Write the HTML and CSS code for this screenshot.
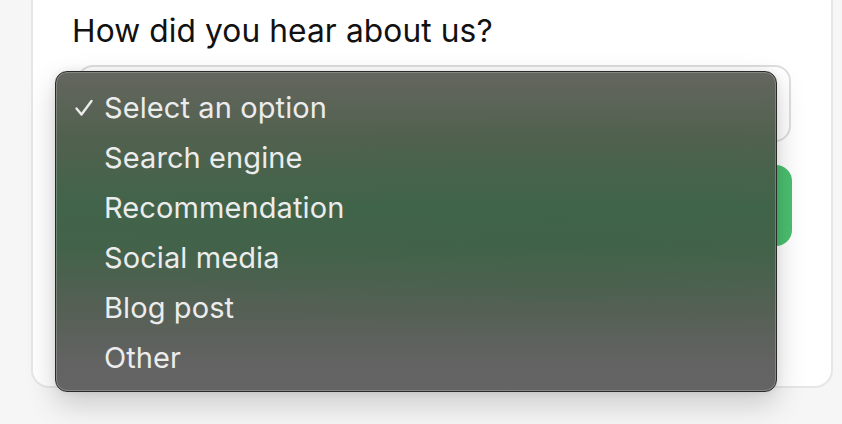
FILE: index.html
```html
<!DOCTYPE html>
<html lang="en">
<head>
<meta charset="utf-8">
<title>How did you hear about us?</title>
<link rel="stylesheet" href="styles.css">
</head>
<body>
<div class="page">
  <div class="card">
    <label class="label" for="source">How did you hear about us?</label>
    <div class="select" id="source"></div>
    <div class="button"></div>
    <ul class="menu" role="listbox">
      <li class="item selected"><svg class="check" viewBox="0 0 20 20" width="20" height="20"><path d="M2.5 10.5 L7.5 16.5 L17.5 3" fill="none" stroke="#ececec" stroke-width="2.4" stroke-linecap="round" stroke-linejoin="round"/></svg><span>Select an option</span></li>
      <li class="item"><span>Search engine</span></li>
      <li class="item"><span>Recommendation</span></li>
      <li class="item"><span>Social media</span></li>
      <li class="item"><span>Blog post</span></li>
      <li class="item"><span>Other</span></li>
    </ul>
  </div>
</div>
</body>
</html>
```

FILE: styles.css
```css
html, body {
  margin: 0;
  padding: 0;
}
body {
  background: #f6f6f6;
  width: 842px;
  height: 424px;
  overflow: hidden;
  font-family: Inter, "Noto Sans", "Liberation Sans", sans-serif;
}
.page {
  padding-left: 31px;
}
.card {
  position: relative;
  box-sizing: border-box;
  width: 802px;
  height: 388px;
  background: #ffffff;
  border: 2px solid #e6e6e6;
  border-top: none;
  border-radius: 0 0 18px 18px;
  padding: 11px 0 0 39px;
}
.label {
  display: block;
  font-size: 31.7px;
  line-height: 40px;
  color: #111111;
  letter-spacing: 0.1px;
}
.select {
  box-sizing: border-box;
  margin: 14px 0 0 5px;
  width: 714px;
  height: 77px;
  border: 2px solid #dedede;
  border-radius: 16px;
  background: #fff;
}
.button {
  margin: 23px 0 0 5px;
  width: 715px;
  height: 81px;
  border-radius: 16px;
  background: #4bbf6e;
}
.menu {
  position: absolute;
  left: 22px;
  top: 71px;
  box-sizing: border-box;
  width: 722px;
  height: 321px;
  margin: 0;
  padding: 10px 0 0 0;
  list-style: none;
  border: 1.5px solid #2a2a2a;
  border-radius: 12px;
  background:
    radial-gradient(ellipse 60% 35% at 70% 48%, rgba(60, 100, 70, 0.35), rgba(60, 100, 70, 0) 100%),
    linear-gradient(180deg, #64665f 0%, #52614f 20%, #41644a 42%, #43624a 55%, #566055 75%, #636363 92%, #646464 100%);
  box-shadow: inset 0 0 0 1px rgba(255, 255, 255, 0.22), 0 12px 30px rgba(0, 0, 0, 0.18), 0 0 8px rgba(0, 0, 0, 0.08);
}
.item {
  display: flex;
  align-items: center;
  height: 50px;
  padding-left: 48px;
  position: relative;
  font-size: 29px;
  color: #ececec;
  letter-spacing: 0.1px;
}
.check {
  position: absolute;
  left: 18px;
  top: 16px;
}
```
